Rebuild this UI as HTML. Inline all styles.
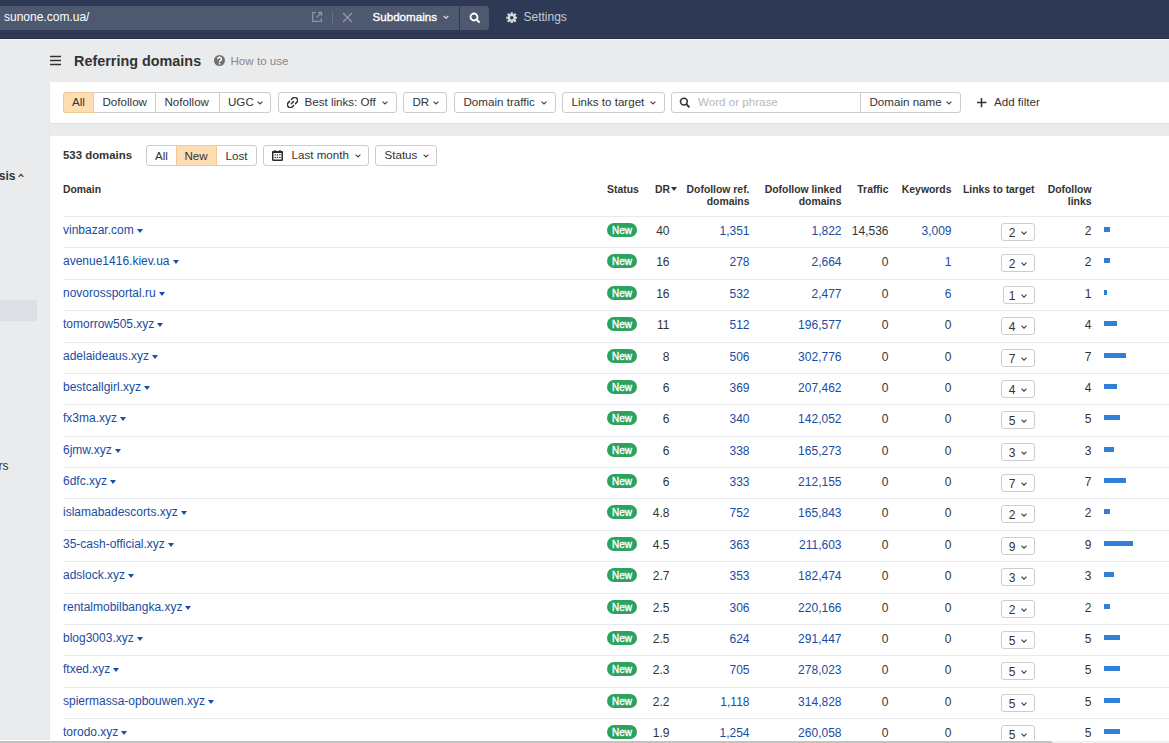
<!DOCTYPE html>
<html><head><meta charset="utf-8">
<style>
*{box-sizing:border-box;margin:0;padding:0}
html,body{width:1169px;height:743px;overflow:hidden}
body{background:#eaebed;font-family:"Liberation Sans",sans-serif;color:#333;position:relative;font-size:12px}
.abs{position:absolute}
#top{position:absolute;left:0;top:0;width:1169px;height:39px;background:#2e3a55;border-bottom:1px solid #242f4a}
#topl{position:absolute;left:0;top:39px;width:1169px;height:1px;background:#f3f4f6}
#inp{position:absolute;left:0;top:6px;width:459px;height:24px;background:#4e5970}
#sbtn{position:absolute;left:460px;top:6px;width:29px;height:24px;background:#4e5970;border-radius:0 3px 3px 0}
.wt{color:#fff}
#panel1{position:absolute;left:50px;top:82px;width:1119px;height:41px;background:#fff}
#panel2{position:absolute;left:50px;top:136px;width:1119px;height:607px;background:#fff}
.btn{position:absolute;border:1px solid #cccccc;border-radius:3px;background:#fff}
.vline{position:absolute;width:1px;background:#cccccc}
.btxt{position:absolute;font-size:11.6px;line-height:14px;color:#333;white-space:nowrap}
.chev{display:block}
.row{position:absolute;left:63px;width:1106px;height:1px;background:#e7e9ec}
.cell{position:absolute;white-space:nowrap;font-size:12px;line-height:16px}
.dom{left:63px;color:#1a4ca2}
.tri{display:inline-block;width:0;height:0;border-left:3px solid transparent;border-right:3px solid transparent;border-top:4px solid #1a4ca2;margin-left:3px;position:relative;top:-1px}
.badge{position:absolute;left:607px;width:30px;height:14px;border-radius:7px;background:#2ba25d;color:#fff;font-size:10px;-webkit-text-stroke:0.35px #fff;line-height:15px;text-align:center}
.num{text-align:right;color:#333}
.lnk{color:#1a4ca2}
.sel{position:absolute;height:18px;margin-top:6px;border:1px solid #cdcdcd;border-radius:3px;padding:0 7px 0 7px;line-height:16px;font-size:12px;white-space:nowrap;display:flex;align-items:center}
.st{position:relative;top:1px}
.sch{margin-left:5.5px;position:relative;top:1px}
.chv{display:inline-block;width:4px;height:4px;border-right:1.1px solid #555;border-bottom:1.1px solid #555;transform:rotate(45deg);margin-left:6px;position:relative;top:-3px}
.bar{position:absolute;left:1104px;height:5px;background:#2f80d6}
.th{position:absolute;font-weight:bold;font-size:10.4px;line-height:12px;color:#333;text-align:right;white-space:nowrap}
</style></head><body>
<div id="top"></div><div id="topl"></div>
<div id="inp"></div>
<div id="sbtn"></div>
<div class="abs wt" style="left:4px;top:10px;font-size:12px">sunone.com.ua/</div>
<div class="abs wt" style="left:372.5px;top:10px;font-size:11.6px;-webkit-text-stroke:0.35px #fff">Subdomains</div>
<svg class="abs" style="left:311px;top:11px" width="12" height="12" viewBox="0 0 12 12"><g fill="none" stroke="#8a93a5" stroke-width="1.3"><path d="M5 1.7 H1.7 V10.3 H10.3 V7"/><path d="M7 1.5 H10.5 V5 M10.5 1.5 L5.5 6.5"/></g></svg>
<div class="abs" style="left:332px;top:12px;width:1px;height:11px;background:#667086"></div>
<svg class="abs" style="left:342px;top:12px" width="11" height="11" viewBox="0 0 11 11"><path d="M1 1 L10 10 M10 1 L1 10" stroke="#8f97a8" stroke-width="1.4"/></svg>
<svg class="abs" style="left:442.5px;top:15px" width="6" height="5" viewBox="0 0 6 5"><path d="M0.7 1 L3 3.3 L5.3 1" fill="none" stroke="#e6e8ec" stroke-width="1.1"/></svg>
<div class="abs" style="left:459px;top:6px;width:1px;height:24px;background:#2e3a54"></div>
<svg class="abs" style="left:469px;top:12px" width="12" height="12" viewBox="0 0 12 12"><circle cx="5" cy="5" r="3.5" fill="none" stroke="#fff" stroke-width="1.8"/><path d="M7.5 7.5 L10.6 10.6" stroke="#fff" stroke-width="2"/></svg>
<svg class="abs" style="left:505.6px;top:11.6px" width="11.5" height="11.5" viewBox="0 0 24 24"><g fill="#d3d6dc"><circle cx="12" cy="12" r="8.4"/><rect x="9.7" y="0.3" width="4.6" height="6" rx="0.6" transform="rotate(0 12 12)"/><rect x="9.7" y="0.3" width="4.6" height="6" rx="0.6" transform="rotate(45 12 12)"/><rect x="9.7" y="0.3" width="4.6" height="6" rx="0.6" transform="rotate(90 12 12)"/><rect x="9.7" y="0.3" width="4.6" height="6" rx="0.6" transform="rotate(135 12 12)"/><rect x="9.7" y="0.3" width="4.6" height="6" rx="0.6" transform="rotate(180 12 12)"/><rect x="9.7" y="0.3" width="4.6" height="6" rx="0.6" transform="rotate(225 12 12)"/><rect x="9.7" y="0.3" width="4.6" height="6" rx="0.6" transform="rotate(270 12 12)"/><rect x="9.7" y="0.3" width="4.6" height="6" rx="0.6" transform="rotate(315 12 12)"/></g><circle cx="12" cy="12" r="3.5" fill="#2e3a55"/></svg>

<div class="abs" style="left:523.5px;top:10px;font-size:12px;color:#c5cad3">Settings</div>

<svg class="abs" style="left:50px;top:55px" width="11" height="11" viewBox="0 0 11 11"><path d="M0 1.5 H11 M0 5.5 H11 M0 9.5 H11" stroke="#333" stroke-width="1.7"/></svg>
<div class="abs" style="left:74px;top:53px;font-size:14.4px;font-weight:bold;color:#333">Referring domains</div>
<svg class="abs" style="left:214px;top:55px" width="11" height="11" viewBox="0 0 11 11"><circle cx="5.5" cy="5.5" r="5.5" fill="#6f7072"/><path d="M3.7 4.3 A1.85 1.85 0 1 1 6.6 5.7 Q5.5 6.2 5.5 7.1" fill="none" stroke="#fff" stroke-width="1.5"/><circle cx="5.5" cy="8.7" r="0.85" fill="#fff"/></svg>
<div class="abs" style="left:230.5px;top:54px;font-size:11.6px;color:#888">How to use</div>

<div id="panel1"></div><div class="abs" style="left:50px;top:123px;width:1119px;height:1px;background:#dfe0e3"></div><div class="abs" style="left:49px;top:82px;width:1px;height:658px;background:#e4e5e7"></div>
<div class="btn" style="left:63px;top:92px;width:208px;height:21px"></div>
<div class="abs" style="left:63px;top:92px;width:31px;height:21px;background:#fddcb1;border:1px solid #f2c893;border-radius:3px 0 0 3px"></div>
<div class="vline" style="left:155px;top:92px;height:21px"></div>
<div class="vline" style="left:218.5px;top:92px;height:21px"></div>
<div class="btxt" style="left:72px;top:95px">All</div>
<div class="btxt" style="left:102.5px;top:95px">Dofollow</div>
<div class="btxt" style="left:164.5px;top:95px">Nofollow</div>
<div class="btxt" style="left:228px;top:95px">UGC</div>
<div class="abs" style="left:256.5px;top:100.5px;line-height:0"><svg class="chev" width="6" height="4" viewBox="0 0 6 4"><path d="M0.6 0.6 L3 3 L5.4 0.6" fill="none" stroke="#444" stroke-width="1.1"/></svg></div>
<div class="btn" style="left:278px;top:92px;width:119px;height:21px;"></div><div class="btxt" style="left:304.5px;top:95px">Best links: Off</div><div class="abs" style="left:381.5px;top:100.5px;line-height:0"><svg class="chev" width="6" height="4" viewBox="0 0 6 4"><path d="M0.6 0.6 L3 3 L5.4 0.6" fill="none" stroke="#444" stroke-width="1.1"/></svg></div>
<svg class="abs" style="left:287px;top:97px" width="11" height="11" viewBox="0 0 11 11"><g fill="none" stroke="#333" stroke-width="1.5" stroke-linecap="round"><path d="M4.4 2.5 L5.6 1.3 A2.55 2.55 0 0 1 9.7 5.4 L8.5 6.6"/><path d="M6.6 8.5 L5.4 9.7 A2.55 2.55 0 0 1 1.3 5.6 L2.5 4.4"/><path d="M4.3 6.7 L6.7 4.3" stroke-dasharray="1 0.9"/></g></svg>
<div class="btn" style="left:403px;top:92px;width:44px;height:21px;"></div><div class="btxt" style="left:412.5px;top:95px">DR</div><div class="abs" style="left:432.5px;top:100.5px;line-height:0"><svg class="chev" width="6" height="4" viewBox="0 0 6 4"><path d="M0.6 0.6 L3 3 L5.4 0.6" fill="none" stroke="#444" stroke-width="1.1"/></svg></div>
<div class="btn" style="left:454px;top:92px;width:102px;height:21px;"></div><div class="btxt" style="left:463.5px;top:95px">Domain traffic</div><div class="abs" style="left:541px;top:100.5px;line-height:0"><svg class="chev" width="6" height="4" viewBox="0 0 6 4"><path d="M0.6 0.6 L3 3 L5.4 0.6" fill="none" stroke="#444" stroke-width="1.1"/></svg></div>
<div class="btn" style="left:562px;top:92px;width:103px;height:21px;"></div><div class="btxt" style="left:571.5px;top:95px">Links to target</div><div class="abs" style="left:650px;top:100.5px;line-height:0"><svg class="chev" width="6" height="4" viewBox="0 0 6 4"><path d="M0.6 0.6 L3 3 L5.4 0.6" fill="none" stroke="#444" stroke-width="1.1"/></svg></div>
<div class="btn" style="left:671px;top:92px;width:290px;height:21px"></div>
<div class="vline" style="left:860px;top:92px;height:21px"></div>
<svg class="abs" style="left:679px;top:97px" width="12" height="12" viewBox="0 0 12 12"><circle cx="4.9" cy="4.6" r="3.4" fill="none" stroke="#333" stroke-width="1.6"/><path d="M7.4 7.2 L10.4 10.3" stroke="#333" stroke-width="1.9" stroke-linecap="butt"/></svg>
<div class="btxt" style="left:698px;top:95px;color:#b9b9b9">Word or phrase</div>
<div class="btxt" style="left:869.5px;top:95px">Domain name</div>
<div class="abs" style="left:946px;top:100.5px;line-height:0"><svg class="chev" width="6" height="4" viewBox="0 0 6 4"><path d="M0.6 0.6 L3 3 L5.4 0.6" fill="none" stroke="#444" stroke-width="1.1"/></svg></div>
<svg class="abs" style="left:976px;top:97px" width="11" height="11" viewBox="0 0 11 11"><path d="M1 5.6 H10.4 M5.5 1 V10.3" stroke="#333" stroke-width="1.5"/></svg>
<div class="btxt" style="left:994px;top:95px">Add filter</div>
<div id="panel2"></div>
<div class="abs" style="left:63px;top:149px;font-size:11.4px;font-weight:bold;color:#333">533 domains</div>
<div class="btn" style="left:146px;top:145px;width:110.5px;height:21px"></div>
<div class="abs" style="left:175.5px;top:145px;width:41.5px;height:21px;background:#fddcb1;border:1px solid #f2c893"></div>
<div class="btxt" style="left:155px;top:149px">All</div>
<div class="btxt" style="left:184.5px;top:149px">New</div>
<div class="btxt" style="left:225.5px;top:149px">Lost</div>
<div class="btn" style="left:263px;top:145px;width:106px;height:21px;"></div><div class="btxt" style="left:291.5px;top:148px">Last month</div><div class="abs" style="left:354.5px;top:153.5px;line-height:0"><svg class="chev" width="6" height="4" viewBox="0 0 6 4"><path d="M0.6 0.6 L3 3 L5.4 0.6" fill="none" stroke="#444" stroke-width="1.1"/></svg></div>
<svg class="abs" style="left:272px;top:150px" width="11" height="11" viewBox="0 0 11 11"><rect x="0.75" y="1.75" width="9.5" height="8.5" rx="0.8" fill="none" stroke="#2b2b2b" stroke-width="1.5"/><rect x="0.3" y="1" width="10.4" height="2" fill="#2b2b2b"/><rect x="2.4" y="0" width="1.5" height="2" rx="0.4" fill="#2b2b2b"/><rect x="7.1" y="0" width="1.5" height="2" rx="0.4" fill="#2b2b2b"/><g fill="#2b2b2b"><rect x="2.6" y="4.3" width="1.2" height="1.1"/><rect x="4.8" y="4.3" width="1.2" height="1.1"/><rect x="6.8" y="4.4" width="2" height="0.9"/><rect x="2.6" y="7" width="1.2" height="1.1"/><rect x="4.8" y="7" width="1.2" height="1.1"/><rect x="6.8" y="7.1" width="2" height="0.9"/><rect x="3" y="5.2" width="0.4" height="2" opacity="0.5"/><rect x="5.2" y="5.2" width="0.4" height="2" opacity="0.5"/></g></svg>
<div class="btn" style="left:375px;top:145px;width:61.5px;height:21px;"></div><div class="btxt" style="left:384.5px;top:148px">Status</div><div class="abs" style="left:422.5px;top:153.5px;line-height:0"><svg class="chev" width="6" height="4" viewBox="0 0 6 4"><path d="M0.6 0.6 L3 3 L5.4 0.6" fill="none" stroke="#444" stroke-width="1.1"/></svg></div>

<div class="th" style="left:63px; top:184px;text-align:left">Domain</div>
<div class="th" style="left:607px; top:184px;text-align:left">Status</div>
<div class="th" style="left:655px; top:184px;text-align:left">DR</div><svg class="abs" style="left:671px;top:187px" width="6" height="4" viewBox="0 0 6 4"><path d="M0 0 H6 L3 4 Z" fill="#333"/></svg>
<div class="th" style="right:419.50px; top:184px">Dofollow ref.<br>domains</div>
<div class="th" style="right:327.50px; top:184px">Dofollow linked<br>domains</div>
<div class="th" style="right:280.50px; top:184px">Traffic</div>
<div class="th" style="right:217.50px; top:184px">Keywords</div>
<div class="th" style="right:134.50px; top:184px">Links to target</div>
<div class="th" style="right:77.50px; top:184px">Dofollow<br>links</div>

<div class="row" style="top:216.000px"></div>
<div class="cell dom" style="top:222.000px">vinbazar.com<i class="tri"></i></div>
<div class="badge" style="top:223.000px">New</div>
<div class="cell num" style="top:223.000px;right:499.50px">40</div>
<div class="cell num lnk" style="top:223.000px;right:419.50px">1,351</div>
<div class="cell num lnk" style="top:223.000px;right:327.50px">1,822</div>
<div class="cell num" style="top:223.000px;right:280.50px">14,536</div>
<div class="cell num lnk" style="top:223.000px;right:217.50px">3,009</div>
<div class="sel" style="top:217.000px;right:134.00px"><span class="st">2</span><svg class="sch" width="6" height="4" viewBox="0 0 6 4"><path d="M0.5 0.6 L3 3.2 L5.5 0.6" fill="none" stroke="#444" stroke-width="1.15"/></svg></div>
<div class="cell num" style="top:223.000px;right:77.50px">2</div>
<div class="bar" style="top:227.000px;width:6.4px"></div>
<div class="row" style="top:247.375px"></div>
<div class="cell dom" style="top:253.375px">avenue1416.kiev.ua<i class="tri"></i></div>
<div class="badge" style="top:254.375px">New</div>
<div class="cell num" style="top:254.375px;right:499.50px">16</div>
<div class="cell num lnk" style="top:254.375px;right:419.50px">278</div>
<div class="cell num lnk" style="top:254.375px;right:327.50px">2,664</div>
<div class="cell num" style="top:254.375px;right:280.50px">0</div>
<div class="cell num lnk" style="top:254.375px;right:217.50px">1</div>
<div class="sel" style="top:248.375px;right:134.00px"><span class="st">2</span><svg class="sch" width="6" height="4" viewBox="0 0 6 4"><path d="M0.5 0.6 L3 3.2 L5.5 0.6" fill="none" stroke="#444" stroke-width="1.15"/></svg></div>
<div class="cell num" style="top:254.375px;right:77.50px">2</div>
<div class="bar" style="top:258.375px;width:6.4px"></div>
<div class="row" style="top:278.750px"></div>
<div class="cell dom" style="top:284.750px">novorossportal.ru<i class="tri"></i></div>
<div class="badge" style="top:285.750px">New</div>
<div class="cell num" style="top:285.750px;right:499.50px">16</div>
<div class="cell num lnk" style="top:285.750px;right:419.50px">532</div>
<div class="cell num lnk" style="top:285.750px;right:327.50px">2,477</div>
<div class="cell num" style="top:285.750px;right:280.50px">0</div>
<div class="cell num lnk" style="top:285.750px;right:217.50px">6</div>
<div class="sel" style="top:279.750px;right:134.00px;padding-left:4.5px"><span class="st">1</span><svg class="sch" width="6" height="4" viewBox="0 0 6 4"><path d="M0.5 0.6 L3 3.2 L5.5 0.6" fill="none" stroke="#444" stroke-width="1.15"/></svg></div>
<div class="cell num" style="top:285.750px;right:77.50px">1</div>
<div class="bar" style="top:289.750px;width:3.2px"></div>
<div class="row" style="top:310.125px"></div>
<div class="cell dom" style="top:316.125px">tomorrow505.xyz<i class="tri"></i></div>
<div class="badge" style="top:317.125px">New</div>
<div class="cell num" style="top:317.125px;right:499.50px">11</div>
<div class="cell num lnk" style="top:317.125px;right:419.50px">512</div>
<div class="cell num lnk" style="top:317.125px;right:327.50px">196,577</div>
<div class="cell num" style="top:317.125px;right:280.50px">0</div>
<div class="cell num" style="top:317.125px;right:217.50px">0</div>
<div class="sel" style="top:311.125px;right:134.00px"><span class="st">4</span><svg class="sch" width="6" height="4" viewBox="0 0 6 4"><path d="M0.5 0.6 L3 3.2 L5.5 0.6" fill="none" stroke="#444" stroke-width="1.15"/></svg></div>
<div class="cell num" style="top:317.125px;right:77.50px">4</div>
<div class="bar" style="top:321.125px;width:12.8px"></div>
<div class="row" style="top:341.500px"></div>
<div class="cell dom" style="top:347.500px">adelaideaus.xyz<i class="tri"></i></div>
<div class="badge" style="top:348.500px">New</div>
<div class="cell num" style="top:348.500px;right:499.50px">8</div>
<div class="cell num lnk" style="top:348.500px;right:419.50px">506</div>
<div class="cell num lnk" style="top:348.500px;right:327.50px">302,776</div>
<div class="cell num" style="top:348.500px;right:280.50px">0</div>
<div class="cell num" style="top:348.500px;right:217.50px">0</div>
<div class="sel" style="top:342.500px;right:134.00px"><span class="st">7</span><svg class="sch" width="6" height="4" viewBox="0 0 6 4"><path d="M0.5 0.6 L3 3.2 L5.5 0.6" fill="none" stroke="#444" stroke-width="1.15"/></svg></div>
<div class="cell num" style="top:348.500px;right:77.50px">7</div>
<div class="bar" style="top:352.500px;width:22.4px"></div>
<div class="row" style="top:372.875px"></div>
<div class="cell dom" style="top:378.875px">bestcallgirl.xyz<i class="tri"></i></div>
<div class="badge" style="top:379.875px">New</div>
<div class="cell num" style="top:379.875px;right:499.50px">6</div>
<div class="cell num lnk" style="top:379.875px;right:419.50px">369</div>
<div class="cell num lnk" style="top:379.875px;right:327.50px">207,462</div>
<div class="cell num" style="top:379.875px;right:280.50px">0</div>
<div class="cell num" style="top:379.875px;right:217.50px">0</div>
<div class="sel" style="top:373.875px;right:134.00px"><span class="st">4</span><svg class="sch" width="6" height="4" viewBox="0 0 6 4"><path d="M0.5 0.6 L3 3.2 L5.5 0.6" fill="none" stroke="#444" stroke-width="1.15"/></svg></div>
<div class="cell num" style="top:379.875px;right:77.50px">4</div>
<div class="bar" style="top:383.875px;width:12.8px"></div>
<div class="row" style="top:404.250px"></div>
<div class="cell dom" style="top:410.250px">fx3ma.xyz<i class="tri"></i></div>
<div class="badge" style="top:411.250px">New</div>
<div class="cell num" style="top:411.250px;right:499.50px">6</div>
<div class="cell num lnk" style="top:411.250px;right:419.50px">340</div>
<div class="cell num lnk" style="top:411.250px;right:327.50px">142,052</div>
<div class="cell num" style="top:411.250px;right:280.50px">0</div>
<div class="cell num" style="top:411.250px;right:217.50px">0</div>
<div class="sel" style="top:405.250px;right:134.00px"><span class="st">5</span><svg class="sch" width="6" height="4" viewBox="0 0 6 4"><path d="M0.5 0.6 L3 3.2 L5.5 0.6" fill="none" stroke="#444" stroke-width="1.15"/></svg></div>
<div class="cell num" style="top:411.250px;right:77.50px">5</div>
<div class="bar" style="top:415.250px;width:16.0px"></div>
<div class="row" style="top:435.625px"></div>
<div class="cell dom" style="top:441.625px">6jmw.xyz<i class="tri"></i></div>
<div class="badge" style="top:442.625px">New</div>
<div class="cell num" style="top:442.625px;right:499.50px">6</div>
<div class="cell num lnk" style="top:442.625px;right:419.50px">338</div>
<div class="cell num lnk" style="top:442.625px;right:327.50px">165,273</div>
<div class="cell num" style="top:442.625px;right:280.50px">0</div>
<div class="cell num" style="top:442.625px;right:217.50px">0</div>
<div class="sel" style="top:436.625px;right:134.00px"><span class="st">3</span><svg class="sch" width="6" height="4" viewBox="0 0 6 4"><path d="M0.5 0.6 L3 3.2 L5.5 0.6" fill="none" stroke="#444" stroke-width="1.15"/></svg></div>
<div class="cell num" style="top:442.625px;right:77.50px">3</div>
<div class="bar" style="top:446.625px;width:9.6px"></div>
<div class="row" style="top:467.000px"></div>
<div class="cell dom" style="top:473.000px">6dfc.xyz<i class="tri"></i></div>
<div class="badge" style="top:474.000px">New</div>
<div class="cell num" style="top:474.000px;right:499.50px">6</div>
<div class="cell num lnk" style="top:474.000px;right:419.50px">333</div>
<div class="cell num lnk" style="top:474.000px;right:327.50px">212,155</div>
<div class="cell num" style="top:474.000px;right:280.50px">0</div>
<div class="cell num" style="top:474.000px;right:217.50px">0</div>
<div class="sel" style="top:468.000px;right:134.00px"><span class="st">7</span><svg class="sch" width="6" height="4" viewBox="0 0 6 4"><path d="M0.5 0.6 L3 3.2 L5.5 0.6" fill="none" stroke="#444" stroke-width="1.15"/></svg></div>
<div class="cell num" style="top:474.000px;right:77.50px">7</div>
<div class="bar" style="top:478.000px;width:22.4px"></div>
<div class="row" style="top:498.375px"></div>
<div class="cell dom" style="top:504.375px">islamabadescorts.xyz<i class="tri"></i></div>
<div class="badge" style="top:505.375px">New</div>
<div class="cell num" style="top:505.375px;right:499.50px">4.8</div>
<div class="cell num lnk" style="top:505.375px;right:419.50px">752</div>
<div class="cell num lnk" style="top:505.375px;right:327.50px">165,843</div>
<div class="cell num" style="top:505.375px;right:280.50px">0</div>
<div class="cell num" style="top:505.375px;right:217.50px">0</div>
<div class="sel" style="top:499.375px;right:134.00px"><span class="st">2</span><svg class="sch" width="6" height="4" viewBox="0 0 6 4"><path d="M0.5 0.6 L3 3.2 L5.5 0.6" fill="none" stroke="#444" stroke-width="1.15"/></svg></div>
<div class="cell num" style="top:505.375px;right:77.50px">2</div>
<div class="bar" style="top:509.375px;width:6.4px"></div>
<div class="row" style="top:529.750px"></div>
<div class="cell dom" style="top:535.750px">35-cash-official.xyz<i class="tri"></i></div>
<div class="badge" style="top:536.750px">New</div>
<div class="cell num" style="top:536.750px;right:499.50px">4.5</div>
<div class="cell num lnk" style="top:536.750px;right:419.50px">363</div>
<div class="cell num lnk" style="top:536.750px;right:327.50px">211,603</div>
<div class="cell num" style="top:536.750px;right:280.50px">0</div>
<div class="cell num" style="top:536.750px;right:217.50px">0</div>
<div class="sel" style="top:530.750px;right:134.00px"><span class="st">9</span><svg class="sch" width="6" height="4" viewBox="0 0 6 4"><path d="M0.5 0.6 L3 3.2 L5.5 0.6" fill="none" stroke="#444" stroke-width="1.15"/></svg></div>
<div class="cell num" style="top:536.750px;right:77.50px">9</div>
<div class="bar" style="top:540.750px;width:28.8px"></div>
<div class="row" style="top:561.125px"></div>
<div class="cell dom" style="top:567.125px">adslock.xyz<i class="tri"></i></div>
<div class="badge" style="top:568.125px">New</div>
<div class="cell num" style="top:568.125px;right:499.50px">2.7</div>
<div class="cell num lnk" style="top:568.125px;right:419.50px">353</div>
<div class="cell num lnk" style="top:568.125px;right:327.50px">182,474</div>
<div class="cell num" style="top:568.125px;right:280.50px">0</div>
<div class="cell num" style="top:568.125px;right:217.50px">0</div>
<div class="sel" style="top:562.125px;right:134.00px"><span class="st">3</span><svg class="sch" width="6" height="4" viewBox="0 0 6 4"><path d="M0.5 0.6 L3 3.2 L5.5 0.6" fill="none" stroke="#444" stroke-width="1.15"/></svg></div>
<div class="cell num" style="top:568.125px;right:77.50px">3</div>
<div class="bar" style="top:572.125px;width:9.6px"></div>
<div class="row" style="top:592.500px"></div>
<div class="cell dom" style="top:598.500px">rentalmobilbangka.xyz<i class="tri"></i></div>
<div class="badge" style="top:599.500px">New</div>
<div class="cell num" style="top:599.500px;right:499.50px">2.5</div>
<div class="cell num lnk" style="top:599.500px;right:419.50px">306</div>
<div class="cell num lnk" style="top:599.500px;right:327.50px">220,166</div>
<div class="cell num" style="top:599.500px;right:280.50px">0</div>
<div class="cell num" style="top:599.500px;right:217.50px">0</div>
<div class="sel" style="top:593.500px;right:134.00px"><span class="st">2</span><svg class="sch" width="6" height="4" viewBox="0 0 6 4"><path d="M0.5 0.6 L3 3.2 L5.5 0.6" fill="none" stroke="#444" stroke-width="1.15"/></svg></div>
<div class="cell num" style="top:599.500px;right:77.50px">2</div>
<div class="bar" style="top:603.500px;width:6.4px"></div>
<div class="row" style="top:623.875px"></div>
<div class="cell dom" style="top:629.875px">blog3003.xyz<i class="tri"></i></div>
<div class="badge" style="top:630.875px">New</div>
<div class="cell num" style="top:630.875px;right:499.50px">2.5</div>
<div class="cell num lnk" style="top:630.875px;right:419.50px">624</div>
<div class="cell num lnk" style="top:630.875px;right:327.50px">291,447</div>
<div class="cell num" style="top:630.875px;right:280.50px">0</div>
<div class="cell num" style="top:630.875px;right:217.50px">0</div>
<div class="sel" style="top:624.875px;right:134.00px"><span class="st">5</span><svg class="sch" width="6" height="4" viewBox="0 0 6 4"><path d="M0.5 0.6 L3 3.2 L5.5 0.6" fill="none" stroke="#444" stroke-width="1.15"/></svg></div>
<div class="cell num" style="top:630.875px;right:77.50px">5</div>
<div class="bar" style="top:634.875px;width:16.0px"></div>
<div class="row" style="top:655.250px"></div>
<div class="cell dom" style="top:661.250px">ftxed.xyz<i class="tri"></i></div>
<div class="badge" style="top:662.250px">New</div>
<div class="cell num" style="top:662.250px;right:499.50px">2.3</div>
<div class="cell num lnk" style="top:662.250px;right:419.50px">705</div>
<div class="cell num lnk" style="top:662.250px;right:327.50px">278,023</div>
<div class="cell num" style="top:662.250px;right:280.50px">0</div>
<div class="cell num" style="top:662.250px;right:217.50px">0</div>
<div class="sel" style="top:656.250px;right:134.00px"><span class="st">5</span><svg class="sch" width="6" height="4" viewBox="0 0 6 4"><path d="M0.5 0.6 L3 3.2 L5.5 0.6" fill="none" stroke="#444" stroke-width="1.15"/></svg></div>
<div class="cell num" style="top:662.250px;right:77.50px">5</div>
<div class="bar" style="top:666.250px;width:16.0px"></div>
<div class="row" style="top:686.625px"></div>
<div class="cell dom" style="top:692.625px">spiermassa-opbouwen.xyz<i class="tri"></i></div>
<div class="badge" style="top:693.625px">New</div>
<div class="cell num" style="top:693.625px;right:499.50px">2.2</div>
<div class="cell num lnk" style="top:693.625px;right:419.50px">1,118</div>
<div class="cell num lnk" style="top:693.625px;right:327.50px">314,828</div>
<div class="cell num" style="top:693.625px;right:280.50px">0</div>
<div class="cell num" style="top:693.625px;right:217.50px">0</div>
<div class="sel" style="top:687.625px;right:134.00px"><span class="st">5</span><svg class="sch" width="6" height="4" viewBox="0 0 6 4"><path d="M0.5 0.6 L3 3.2 L5.5 0.6" fill="none" stroke="#444" stroke-width="1.15"/></svg></div>
<div class="cell num" style="top:693.625px;right:77.50px">5</div>
<div class="bar" style="top:697.625px;width:16.0px"></div>
<div class="row" style="top:718.000px"></div>
<div class="cell dom" style="top:724.000px">torodo.xyz<i class="tri"></i></div>
<div class="badge" style="top:725.000px">New</div>
<div class="cell num" style="top:725.000px;right:499.50px">1.9</div>
<div class="cell num lnk" style="top:725.000px;right:419.50px">1,254</div>
<div class="cell num lnk" style="top:725.000px;right:327.50px">260,058</div>
<div class="cell num" style="top:725.000px;right:280.50px">0</div>
<div class="cell num" style="top:725.000px;right:217.50px">0</div>
<div class="sel" style="top:719.000px;right:134.00px"><span class="st">5</span><svg class="sch" width="6" height="4" viewBox="0 0 6 4"><path d="M0.5 0.6 L3 3.2 L5.5 0.6" fill="none" stroke="#444" stroke-width="1.15"/></svg></div>
<div class="cell num" style="top:725.000px;right:77.50px">5</div>
<div class="bar" style="top:729.000px;width:16.0px"></div>

<div class="abs" style="right:1153.5px;top:169px;font-size:12px;font-weight:bold;color:#333">Analysis</div>
<svg class="abs" style="left:18px;top:172.5px" width="6" height="5" viewBox="0 0 6 5"><path d="M0.7 3.8 L3 1.3 L5.3 3.8" fill="none" stroke="#333" stroke-width="1.2"/></svg>
<div class="abs" style="left:0;top:300px;width:37px;height:21px;background:#dcdfe3;border-radius:0 3px 3px 0"></div>
<div class="abs" style="right:1160.5px;top:459px;font-size:12px;color:#333">Competitors</div>
<div class="abs" style="left:0;top:740px;width:1169px;height:1px;background:#fff"></div>
<div class="abs" style="left:0;top:741px;width:1169px;height:2px;background:#f1f1f1"></div>
<div class="abs" style="left:0;top:741px;width:1052px;height:2px;background:#c3c3c3"></div>
</body></html>
